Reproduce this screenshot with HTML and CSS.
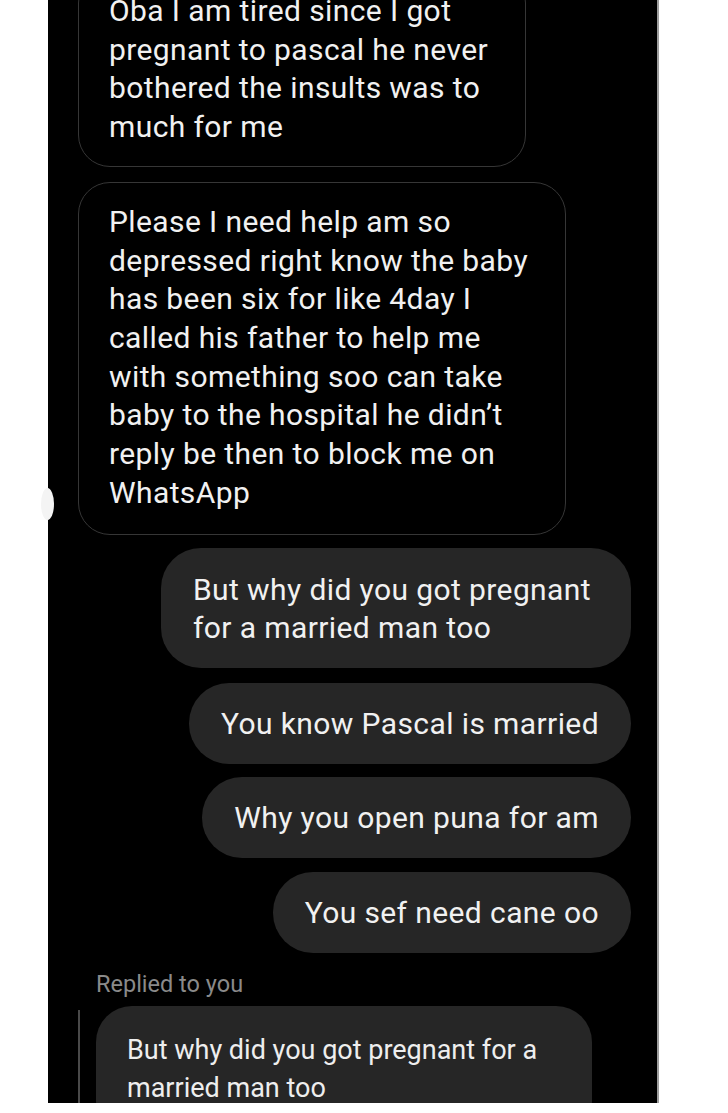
FILE: index.html
```html
<!DOCTYPE html>
<html lang="en">
<head>
<meta charset="utf-8">
<title>Chat</title>
<link rel="stylesheet" href="styles.css">
</head>
<body>
<div class="panel">
  <div class="thread">
    <div class="bubble in first">Oba I am tired since I got<br>pregnant to pascal he never<br>bothered the insults was to<br>much for me</div>
    <div class="bubble in second">Please I need help am so<br>depressed right know the baby<br>has been six for like 4day I<br>called his father to help me<br>with something soo can take<br>baby to the hospital he didn’t<br>reply be then to block me on<br>WhatsApp</div>
    <div class="bubble out two-line">But why did you got pregnant<br>for a married man too</div>
    <div class="bubble out single s2">You know Pascal is married</div>
    <div class="bubble out single s3">Why you open puna for am</div>
    <div class="bubble out single s4">You sef need cane oo</div>
    <div class="replied-label">Replied to you</div>
    <div class="reply-row">
      <div class="reply-bar"></div>
      <div class="reply-bubble">But why did you got pregnant for a<br>married man too</div>
    </div>
  </div>
</div>
<div class="edge-blob"></div>
</body>
</html>
```

FILE: styles.css
```css
html, body {
  margin: 0;
  padding: 0;
  background: #ffffff;
}

body {
  width: 728px;
  height: 1113px;
  position: relative;
  overflow: hidden;
  font-family: Roboto, "Noto Sans", "Liberation Sans", sans-serif;
}

.panel {
  margin-left: 48px;
  width: 609px;
  height: 1103px;
  background: #000000;
  border-right: 2px solid #9d9d9d;
  overflow: hidden;
}

.thread {
  display: flex;
  flex-direction: column;
  padding: 0 26px 0 30px;
  color: #f1f1f1;
}

.bubble {
  box-sizing: border-box;
  font-size: 30px;
  letter-spacing: 0.4px;
  white-space: nowrap;
}

.bubble.in {
  align-self: flex-start;
  border: 1.5px solid #363636;
  border-radius: 32px;
  padding: 20px 30px 20px 30px;
  line-height: 38.7px;
}

.bubble.first {
  margin-top: -29px;
  width: 448px;
  padding-bottom: 19px;
}

.bubble.second {
  margin-top: 15px;
  width: 488px;
  padding-bottom: 22px;
}

.bubble.out {
  align-self: flex-end;
  background: #262626;
  border-radius: 40px;
  padding: 0 32px;
}

.bubble.two-line {
  margin-top: 13px;
  width: 470px;
  padding-top: 23px;
  padding-bottom: 21px;
  line-height: 38px;
}

.bubble.single {
  height: 81px;
  line-height: 81px;
}

.s2 { margin-top: 15px; }
.s3 { margin-top: 13px; }
.s4 { margin-top: 14px; }

.replied-label {
  margin-top: 19px;
  margin-left: 18px;
  font-size: 23.5px;
  line-height: 24px;
  color: #8a8a8a;
}

.reply-row {
  display: flex;
  gap: 16px;
  margin-top: 10px;
}

.reply-bar {
  width: 2px;
  margin-top: 4px;
  background: #4a4a4a;
  height: 120px;
}

.reply-bubble {
  box-sizing: border-box;
  width: 496px;
  height: 130px;
  background: #262626;
  border-radius: 36px;
  padding: 25px 31px 0;
  font-size: 27px;
  line-height: 38px;
  color: #eeeeee;
  white-space: nowrap;
}

.edge-blob {
  position: absolute;
  left: 41px;
  top: 488px;
  width: 13px;
  height: 32px;
  border-radius: 50%;
  background: #f4f4f4;
}
```
